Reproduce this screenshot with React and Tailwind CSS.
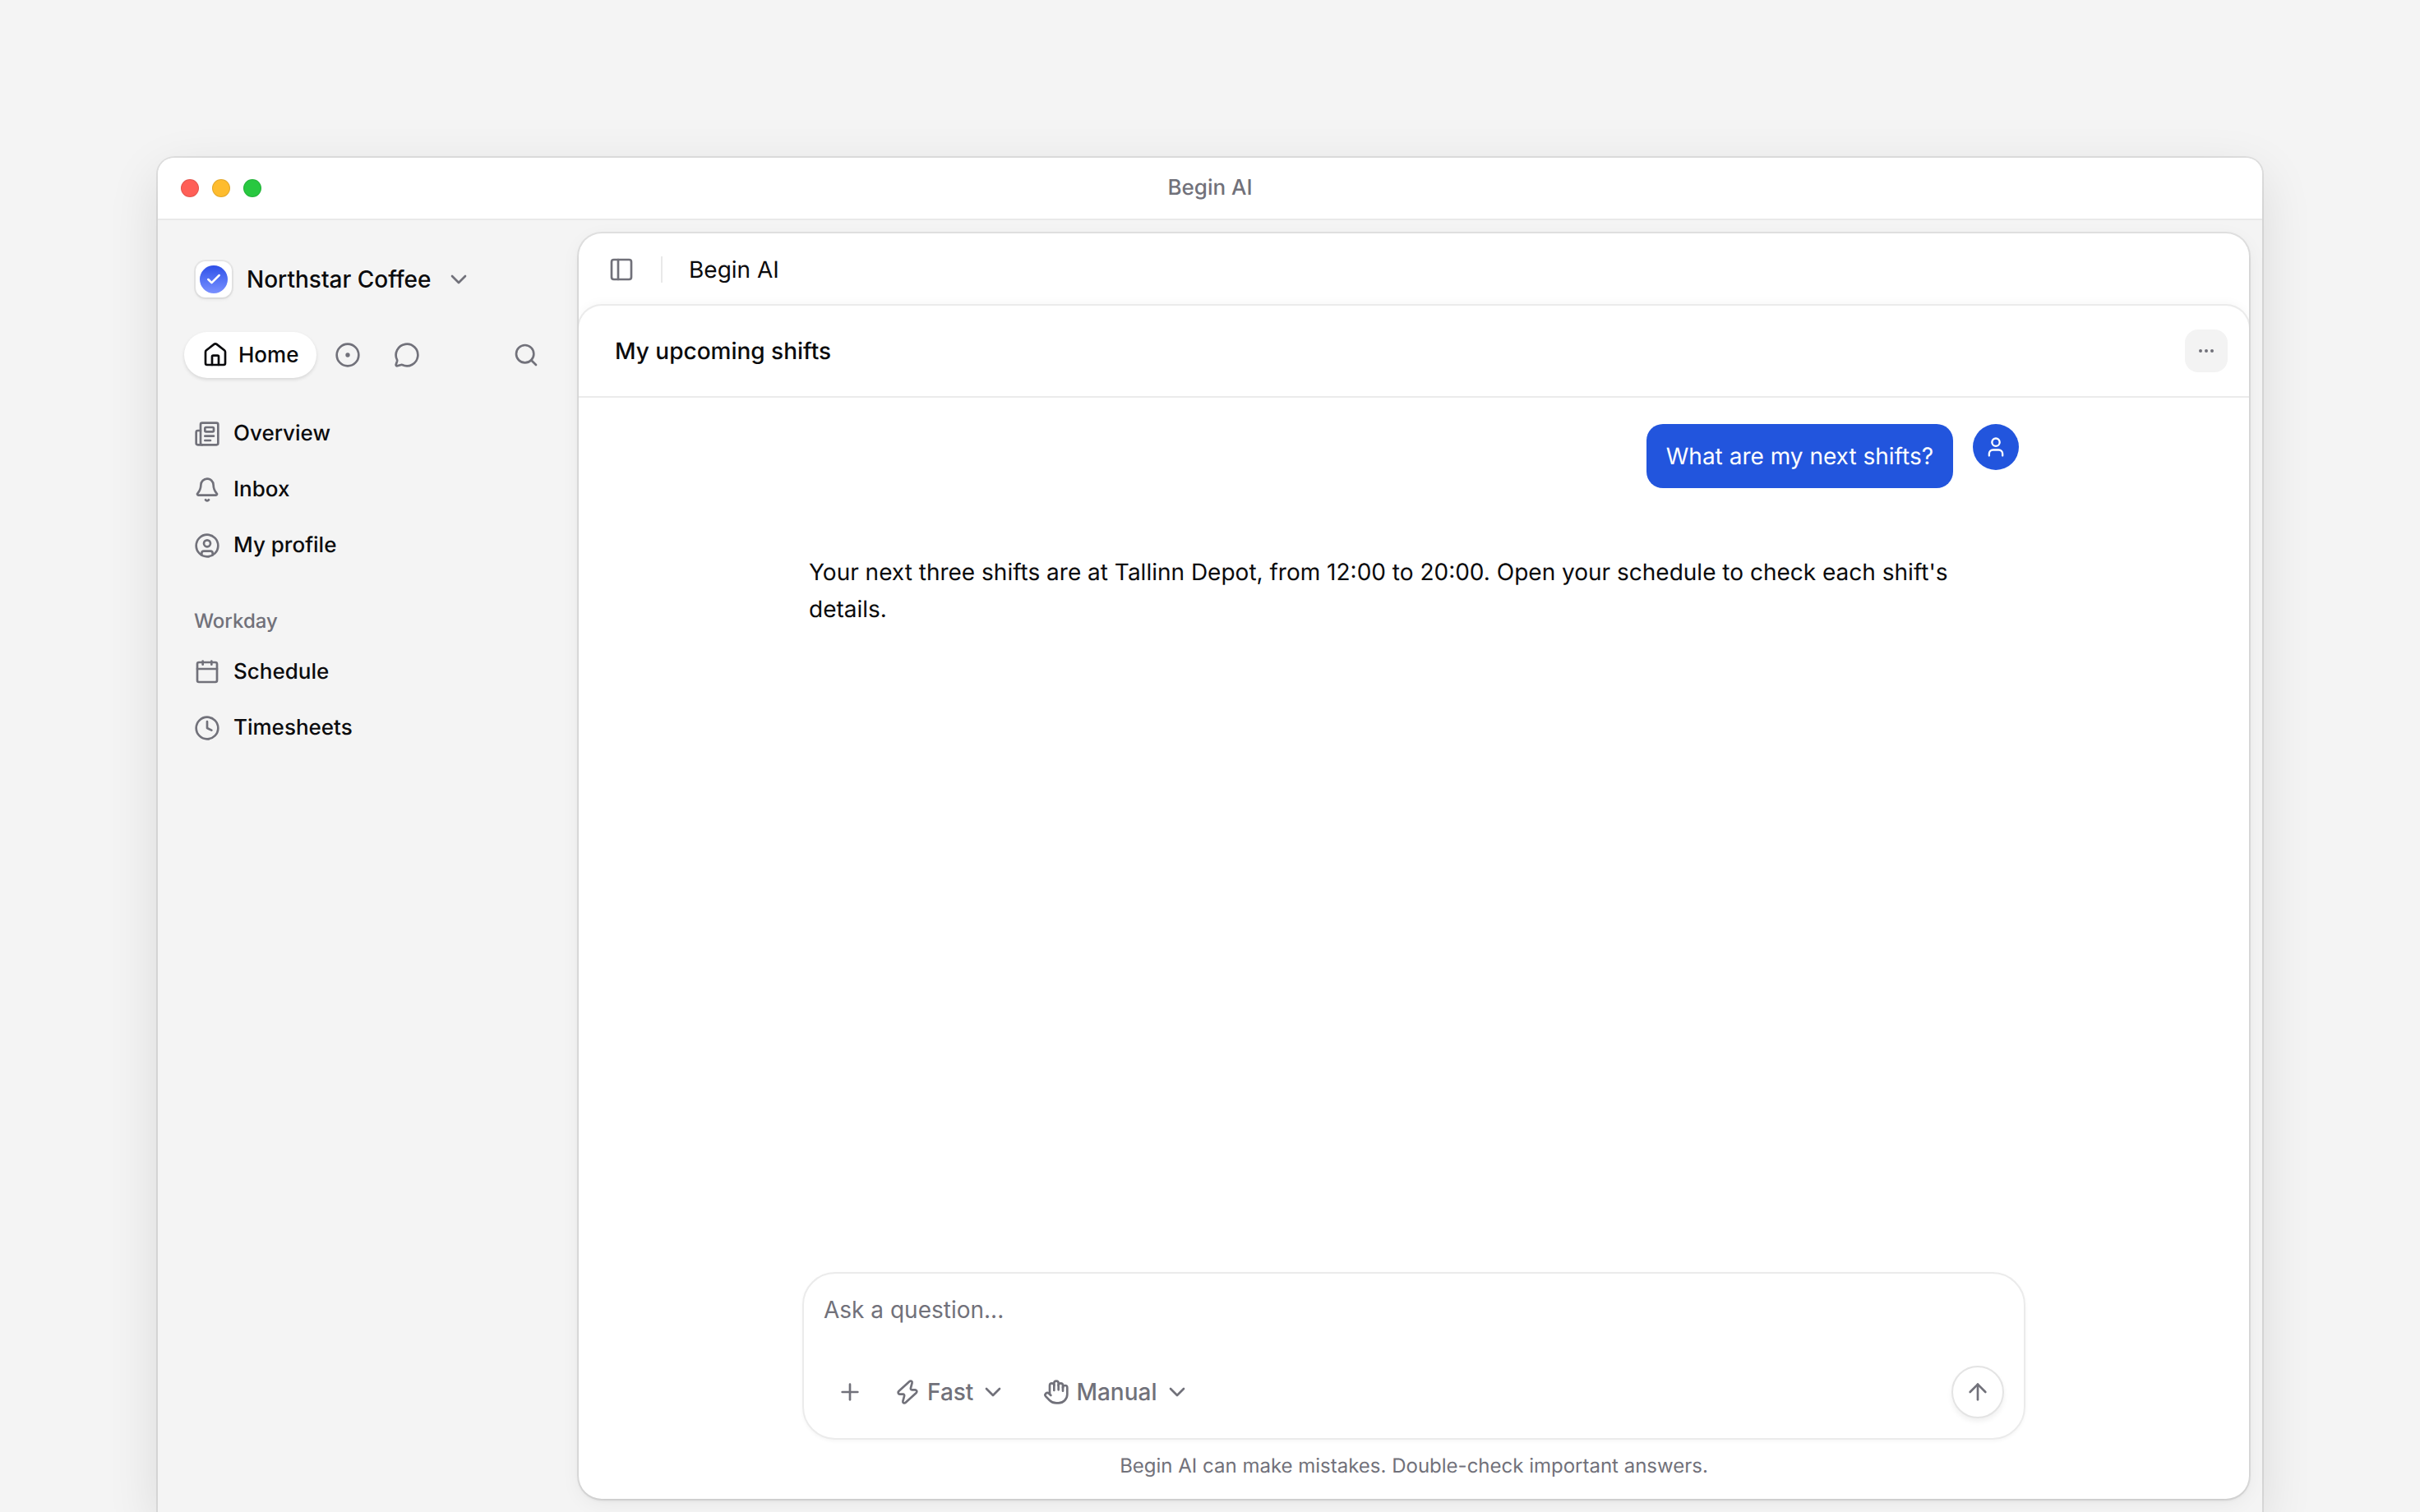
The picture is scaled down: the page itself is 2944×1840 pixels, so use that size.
import {
  ArrowUp,
  Check,
  ChevronDown,
  CircleDot,
  Clock,
  Ellipsis,
  Hand,
  MessageCircle,
  PanelLeft,
  Plus,
  Search,
  User,
} from "lucide-react"

function Icon({ className, children }) {
  return (
    <svg
      className={className}
      viewBox="0 0 24 24"
      fill="none"
      stroke="currentColor"
      strokeWidth={2}
      strokeLinecap="round"
      strokeLinejoin="round"
      aria-hidden="true"
    >
      {children}
    </svg>
  )
}

function HomeIcon({ className }) {
  return (
    <Icon className={className}>
      <path d="M3 9.2a2 2 0 0 1 .75-1.55l7.1-5.5a1.85 1.85 0 0 1 2.3 0l7.1 5.5A2 2 0 0 1 21 9.2v10.3a1.5 1.5 0 0 1-1.5 1.5h-15A1.5 1.5 0 0 1 3 19.5z" />
      <path d="M9 21v-7.5a1 1 0 0 1 1-1h4a1 1 0 0 1 1 1V21" />
    </Icon>
  )
}

function OverviewIcon({ className }) {
  return (
    <Icon className={className}>
      <rect x="6" y="2" width="16" height="20" rx="1.5" />
      <path d="M6 9H3.5A1.5 1.5 0 0 0 2 10.5v10A1.5 1.5 0 0 0 3.5 22h4" />
      <rect x="10" y="6" width="8" height="4" rx="1" />
      <path d="M10 14h8" />
      <path d="M10 18h5" />
    </Icon>
  )
}

function BellIcon({ className }) {
  return (
    <Icon className={className}>
      <path d="M12 2a5.7 5.7 0 0 0-5.7 5.5c-.1 3.9-1.2 5.8-3 7.8A1 1 0 0 0 4 17h16a1 1 0 0 0 .7-1.7c-1.8-2-2.9-3.9-3-7.8A5.7 5.7 0 0 0 12 2z" />
      <path d="M10.5 21.2a1.8 1.8 0 0 0 3 0" />
    </Icon>
  )
}

function ProfileIcon({ className }) {
  return (
    <Icon className={className}>
      <circle cx="12" cy="12" r="10" />
      <circle cx="12" cy="10" r="3" />
      <path d="M7 20.5V19a2 2 0 0 1 2-2h6a2 2 0 0 1 2 2v1.5" />
    </Icon>
  )
}

function CalendarIcon({ className }) {
  return (
    <Icon className={className}>
      <rect x="3" y="3" width="18" height="18" rx="1.5" />
      <path d="M3 9h18" />
      <path d="M8 2v3" />
      <path d="M16 2v3" />
    </Icon>
  )
}

function BoltIcon({ className }) {
  return (
    <Icon className={className}>
      <path d="M13.7 2.4 4 11.2c-1.1 1-.4 2.7 1 2.8h3a1.2 1.2 0 0 1 1.1 1.5l-1.3 4.8c-.4 1.6 1.3 2.4 2.5 1.3l9.7-8.8c1.1-1 .4-2.7-1-2.8h-3a1.2 1.2 0 0 1-1.1-1.5l1.3-4.8c.4-1.6-1.3-2.4-2.5-1.3z" />
    </Icon>
  )
}

function NavItem({ icon: NavIcon, label }) {
  return (
    <li>
      <a href="#" className="flex h-[68px] items-center gap-4 px-3 text-[26px] leading-[38px] font-medium">
        <NavIcon className="size-8 text-[#71717a]" />
        {label}
      </a>
    </li>
  )
}

function Sidebar() {
  return (
    <aside className="flex w-[512px] shrink-0 flex-col pt-[42px] pr-9 pl-8">
      <button type="button" className="flex items-center gap-[18px] self-start px-[14px] py-2">
        <span className="flex size-11 items-center justify-center rounded-xl bg-white shadow-[0_0_0_2px_rgba(0,0,0,0.05),0_2px_4px_rgba(0,0,0,0.08)]">
          <span className="flex size-[34px] items-center justify-center rounded-full bg-gradient-to-b from-[#2f4fe8] to-[#7a90ff]">
            <Check className="size-5 text-white" strokeWidth={3} />
          </span>
        </span>
        <span className="text-[28px] leading-8 font-medium">Northstar Coffee</span>
        <ChevronDown className="size-8 text-[#71717a]" />
      </button>

      <nav aria-label="Views" className="mt-[34px] flex items-center gap-1 text-[#71717a]">
        <button
          type="button"
          className="flex h-14 items-center gap-3 rounded-full bg-white px-[22px] text-[26px] leading-[38px] font-medium text-[#0b0b0d] shadow-[0_2px_4px_rgba(0,0,0,0.12)]"
        >
          <HomeIcon className="size-8" />
          Home
        </button>
        <button type="button" aria-label="Activity" className="flex h-14 w-[68px] items-center justify-center">
          <CircleDot className="size-8" />
        </button>
        <button type="button" aria-label="Messages" className="flex h-14 w-[68px] items-center justify-center">
          <MessageCircle className="size-8" />
        </button>
        <button type="button" aria-label="Search" className="ml-auto flex size-14 items-center justify-center">
          <Search className="size-8" />
        </button>
      </nav>

      <ul className="mt-[34px]">
        <NavItem icon={OverviewIcon} label="Overview" />
        <NavItem icon={BellIcon} label="Inbox" />
        <NavItem icon={ProfileIcon} label="My profile" />
      </ul>

      <h2 className="mt-10 px-3 text-[24px] leading-9 font-medium text-[#71717a]">Workday</h2>
      <ul className="mt-[10px]">
        <NavItem icon={CalendarIcon} label="Schedule" />
        <NavItem icon={Clock} label="Timesheets" />
      </ul>
    </aside>
  )
}

function Composer() {
  return (
    <form className="flex flex-col rounded-[40px] border-2 border-[#ebebeb] bg-white shadow-[0_2px_4px_rgba(0,0,0,0.04)]">
      <textarea
        rows={1}
        aria-label="Ask a question"
        placeholder="Ask a question..."
        className="h-28 resize-none px-6 pt-[21px] text-[28px] leading-[46px] outline-none placeholder:text-[#71717a]"
      />
      <div className="flex items-center px-6 pb-6 text-[28px] font-medium text-[#71717a]">
        <button type="button" aria-label="Add attachment" className="flex size-16 items-center justify-center">
          <Plus className="size-8" />
        </button>
        <button type="button" className="ml-[22px] flex items-center gap-2">
          <BoltIcon className="size-8" />
          Fast
          <ChevronDown className="size-8" />
        </button>
        <button type="button" className="ml-[45px] flex items-center gap-2">
          <Hand className="size-8" />
          Manual
          <ChevronDown className="size-8" />
        </button>
        <button
          type="submit"
          aria-label="Send"
          className="ml-auto flex size-16 items-center justify-center rounded-full border-2 border-[#e4e4e4] bg-white shadow-[0_4px_6px_rgba(0,0,0,0.06)]"
        >
          <ArrowUp className="size-8" />
        </button>
      </div>
    </form>
  )
}

function Chat() {
  return (
    <section className="flex flex-1 flex-col rounded-t-[28px] shadow-[0_0_0_2px_#ebebeb,0_-4px_12px_rgba(0,0,0,0.03)]">
      <header className="flex h-28 items-center justify-between border-b-2 border-[#ebebeb] pr-[26px] pl-11">
        <h1 className="text-[28px] font-medium">My upcoming shifts</h1>
        <button
          type="button"
          aria-label="More options"
          className="flex size-[52px] items-center justify-center rounded-2xl bg-[#f3f3f3] text-[#71717a]"
        >
          <Ellipsis className="size-6" />
        </button>
      </header>

      <div className="mx-auto flex w-full max-w-[1488px] flex-1 flex-col pt-8">
        <div className="flex flex-1 flex-col px-2 text-[28px]">
          <div className="flex items-start justify-end gap-6">
            <p className="rounded-[20px] bg-[#2255dd] px-6 py-4 leading-[46px] text-white">What are my next shifts?</p>
            <span className="flex size-14 items-center justify-center rounded-full bg-[#2255dd] text-white">
              <User className="size-7" />
            </span>
          </div>
          <p className="mt-20 leading-[45px]">
            Your next three shifts are at Tallinn Depot, from 12:00 to 20:00. Open your schedule to check each shift's
            details.
          </p>
        </div>
        <Composer />
        <p className="pt-3 pb-5 text-center text-[24px] leading-10 text-[#71717a]">
          Begin AI can make mistakes. Double-check important answers.
        </p>
      </div>
    </section>
  )
}

export default function App() {
  return (
    <div className="flex min-h-screen flex-col bg-[#f4f4f4] px-48 pt-48 font-['Inter',sans-serif] text-[#0b0b0d] [text-rendering:geometricPrecision]">
      <div className="flex flex-1 flex-col rounded-t-[20px] bg-[#f4f4f4] shadow-[0_0_0_2px_rgba(0,0,0,0.08),0_20px_64px_rgba(0,0,0,0.11)]">
        {/* Title bar */}
        <div className="grid h-[76px] grid-cols-3 items-center rounded-t-[20px] border-b-2 border-[#e9e9e9] bg-white px-7">
          <div className="flex gap-4">
            <span className="size-[22px] rounded-full border border-black/10 bg-[#ff5f57]" />
            <span className="size-[22px] rounded-full border border-black/10 bg-[#febc2e]" />
            <span className="size-[22px] rounded-full border border-black/10 bg-[#28c840]" />
          </div>
          <p className="text-center text-[26px] leading-[38px] font-medium text-[#71717a]">Begin AI</p>
        </div>

        <div className="flex flex-1">
          <Sidebar />
          <main className="mt-4 mr-4 mb-4 flex flex-1 flex-col overflow-hidden rounded-[28px] bg-white shadow-[0_0_0_2px_rgba(0,0,0,0.07),0_2px_4px_rgba(0,0,0,0.08),0_6px_24px_rgba(0,0,0,0.05)]">
            <div className="flex h-22 items-center pl-9">
              <button type="button" aria-label="Toggle sidebar" className="text-[#71717a]">
                <PanelLeft className="size-8" />
              </button>
              <span className="mx-8 h-8 w-0.5 bg-[#e9e9e9]" />
              <p className="text-[28px]">Begin AI</p>
            </div>
            <Chat />
          </main>
        </div>
      </div>
    </div>
  )
}
